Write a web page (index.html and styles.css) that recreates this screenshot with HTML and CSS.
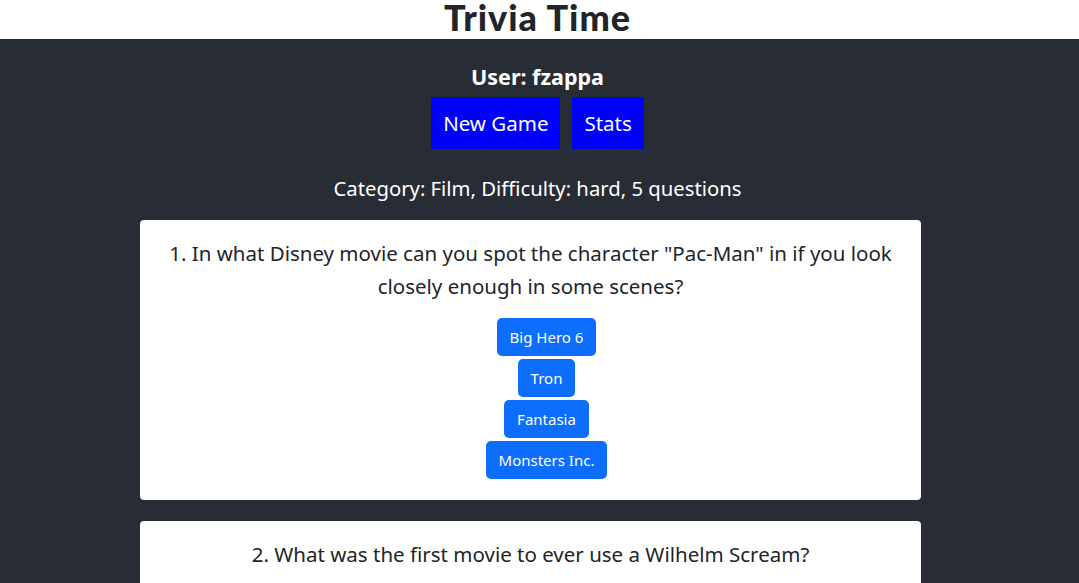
FILE: index.html
```html
<!DOCTYPE html>
<html>
<head>
<meta charset="utf-8">
<link rel="stylesheet" href="styles.css">
</head>
<body>
<header class="top">
  <h1 class="title">Trivia Time</h1>
</header>
<main class="app">
  <div class="user">User: fzappa</div>
  <div class="nav">
    <button class="nav-btn">New Game</button>
    <button class="nav-btn">Stats</button>
  </div>
  <div class="meta">Category: Film, Difficulty: hard, 5 questions</div>
  <section class="card">
    <p class="question">1. In what Disney movie can you spot the character "Pac-Man" in if you look closely enough in some scenes?</p>
    <div class="answers">
      <button class="ans">Big Hero 6</button>
      <button class="ans">Tron</button>
      <button class="ans">Fantasia</button>
      <button class="ans">Monsters Inc.</button>
    </div>
  </section>
  <section class="card">
    <p class="question">2. What was the first movie to ever use a Wilhelm Scream?</p>
    <div class="answers">
      <button class="ans">Distant Drums</button>
      <button class="ans">Treasure of the Sierra Madre</button>
      <button class="ans">The Charge at Feather River</button>
      <button class="ans">Indiana Jones</button>
    </div>
  </section>
</main>
</body>
</html>
```

FILE: styles.css
```css
html, body {
  margin: 0;
  padding: 0;
}
body {
  font-family: "Noto Sans", "Open Sans", sans-serif;
  background: #282c34;
  overflow: hidden;
}
.top {
  background: #ffffff;
  height: 39px;
  display: flex;
  justify-content: center;
  align-items: flex-start;
}
.title {
  margin: 0;
  font-family: "Lato", sans-serif;
  font-weight: 900;
  font-size: 36px;
  line-height: 35px;
  letter-spacing: 1px;
  color: #212529;
  transform: translateX(-2px);
}
.app {
  display: flex;
  flex-direction: column;
  align-items: center;
  color: #ffffff;
  padding-top: 23px;
}
.user {
  font-weight: 700;
  font-size: 21.5px;
  line-height: 30px;
  transform: translateX(-2px);
}
.nav {
  display: flex;
  gap: 12px;
  margin-top: 5px;
  transform: translateX(-2px);
}
.nav-btn {
  background: #0000ff;
  color: #ffffff;
  border: none;
  font-family: inherit;
  font-size: 20.5px;
  height: 52px;
  padding: 0 12px;
}
.meta {
  font-size: 20.3px;
  line-height: 30px;
  margin-top: 24px;
  transform: translateX(-2px);
}
.card {
  align-self: flex-start;
  margin-left: 140px;
  width: 781px;
  box-sizing: border-box;
  background: #ffffff;
  color: #212529;
  border-radius: 4px;
  margin-top: 17px;
  padding: 17px 20px 21px;
  text-align: center;
}
.card + .card {
  margin-top: 21px;
}
.question {
  margin: 0;
  font-size: 20.5px;
  line-height: 33px;
}
.answers {
  display: flex;
  flex-direction: column;
  align-items: center;
  gap: 3px;
  margin-top: 15px;
  padding-left: 32px;
}
.ans {
  background: #0d6efd;
  color: #ffffff;
  border: none;
  border-radius: 5px;
  font-family: inherit;
  font-size: 15px;
  height: 38px;
  padding: 0 13px;
}
```
